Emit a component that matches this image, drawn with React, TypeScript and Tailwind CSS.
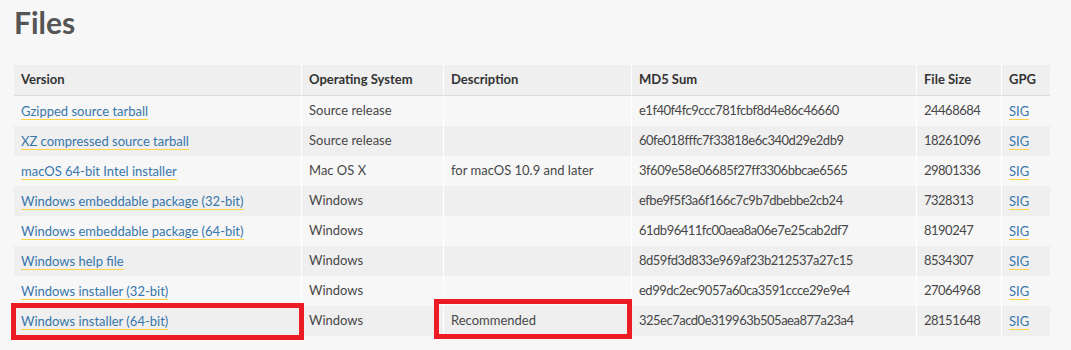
const rows = [
  ["Gzipped source tarball", "Source release", "", "e1f40f4fc9ccc781fcbf8d4e86c46660", "24468684"],
  ["XZ compressed source tarball", "Source release", "", "60fe018fffc7f33818e6c340d29e2db9", "18261096"],
  ["macOS 64-bit Intel installer", "Mac OS X", "for macOS 10.9 and later", "3f609e58e06685f27ff3306bbcae6565", "29801336"],
  ["Windows embeddable package (32-bit)", "Windows", "", "efbe9f5f3a6f166c7c9b7dbebbe2cb24", "7328313"],
  ["Windows embeddable package (64-bit)", "Windows", "", "61db96411fc00aea8a06e7e25cab2df7", "8190247"],
  ["Windows help file", "Windows", "", "8d59fd3d833e969af23b212537a27c15", "8534307"],
  ["Windows installer (32-bit)", "Windows", "", "ed99dc2ec9057a60ca3591ccce29e9e4", "27064968"],
  ["Windows installer (64-bit)", "Windows", "Recommended", "325ec7acd0e319963b505aea877a23a4", "28151648"],
];

const cols = "grid grid-cols-[287px_142px_188px_285px_85px_49px]";
const cell = "flex items-center px-[7px] border-l border-white";

function Link({ children }: { children: React.ReactNode }) {
  return (
    <a href="#" className="text-[#3776ab] border-b border-[#ffd343] leading-[16px]">
      {children}
    </a>
  );
}

export default function App() {
  return (
    <div className="relative h-[350px] w-full overflow-hidden bg-[#f7f7f7] text-[13px] text-[#474747] font-['Lato',sans-serif]">
      <h1 className="pl-[14px] pt-[4px] text-[30px] leading-[36px] font-bold text-[#555]">Files</h1>

      <div className="ml-[14px] mt-[25px] w-[1036px]">
        <div className={`${cols} h-[31px] bg-[#efefef] border-b border-[#dcdcdc] font-bold text-[#333]`}>
          <div className="flex items-center px-[7px]">Version</div>
          <div className={cell}>Operating System</div>
          <div className={cell}>Description</div>
          <div className={cell}>MD5 Sum</div>
          <div className={cell}>File Size</div>
          <div className={cell}>GPG</div>
        </div>
        {rows.map((r, i) => (
          <div key={r[0]} className={`${cols} h-[30px] ${i % 2 === 1 ? "bg-[#efefef]" : "bg-[#f7f7f7]"}`}>
            <div className="flex items-center px-[7px]">
              <Link>{r[0]}</Link>
            </div>
            <div className={cell}>{r[1]}</div>
            <div className={cell}>{r[2]}</div>
            <div className={`${cell} tracking-[-0.5px]`}>{r[3]}</div>
            <div className={`${cell} tracking-[-0.5px]`}>{r[4]}</div>
            <div className={cell}>
              <Link>SIG</Link>
            </div>
          </div>
        ))}
      </div>

      <div className="absolute left-[11px] top-[303px] w-[293px] h-[37px] border-[5px] border-[#ed1c24]" />
      <div className="absolute left-[434px] top-[299px] w-[198px] h-[40px] border-[5px] border-[#ed1c24]" />
    </div>
  );
}
